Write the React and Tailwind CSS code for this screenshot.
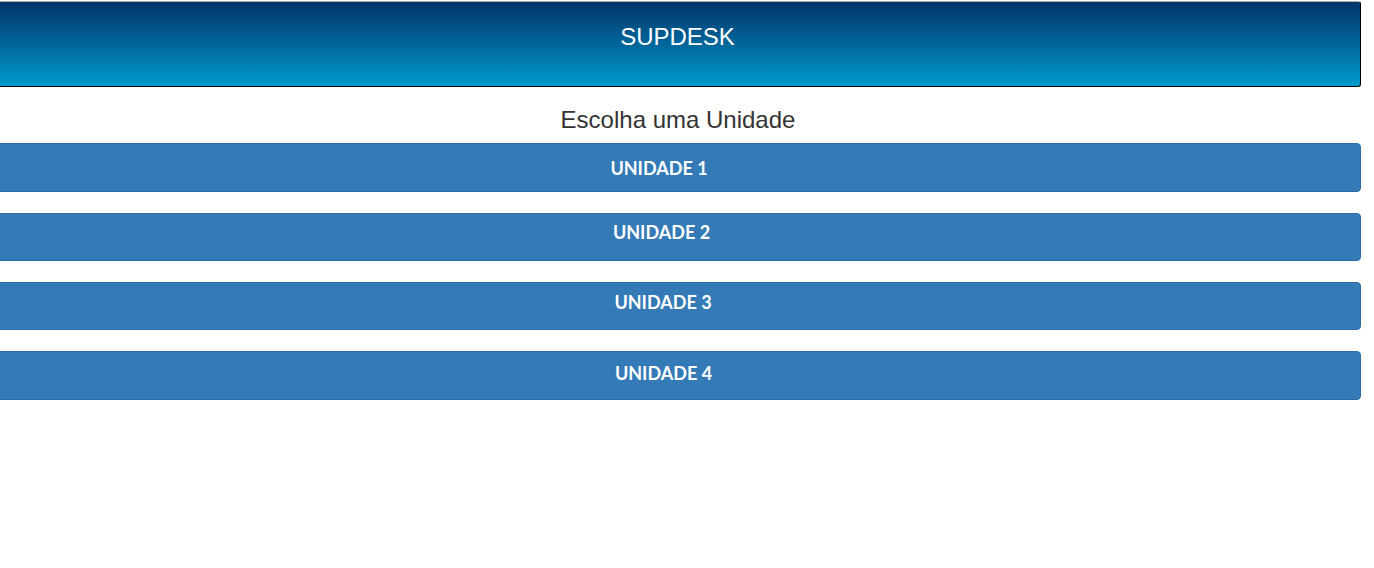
export default function App() {
  const btns = [
    { label: "UNIDADE 1", cls: "h-[49px] pt-[14px] pr-[41px] mt-[0px]" },
    { label: "UNIDADE 2", cls: "h-[48px] pt-[8px] pr-[36px] mt-[21px]" },
    { label: "UNIDADE 3", cls: "h-[48px] pt-[9px] pr-[33px] mt-[21px]" },
    { label: "UNIDADE 4", cls: "h-[49px] pt-[11px] pr-[32px] mt-[21px]" },
  ];
  return (
    <div className="w-[1374px] h-[568px] bg-white overflow-hidden">
      <div className="w-[1361px] pt-px flex flex-col">
        <div className="h-[86px] border-t border-t-[#b0b0b0] border-b border-b-black border-r border-r-black rounded-r-[3px] bg-linear-to-b from-[#02366a] to-[#009acd] flex justify-center pr-[5px] pt-[22px]">
          <span className="text-white text-[24px] leading-[26px] font-['Liberation_Sans',Arial,sans-serif]">SUPDESK</span>
        </div>
        <div className="mt-[20px] flex justify-center pr-[5px]">
          <span className="text-[#333333] text-[24px] leading-[26px] font-['Liberation_Sans',Arial,sans-serif]">Escolha uma Unidade</span>
        </div>
        <div className="mt-[10px] -ml-[2px] w-[1363px] flex flex-col">
          {btns.map((b) => (
            <button
              key={b.label}
              className={`${b.cls} w-full bg-[#337ab7] border border-[#2e6da4] rounded-r-[4px] flex justify-center items-start text-white font-bold text-[18px] leading-[20px] font-['Lato','Open_Sans',sans-serif]`}
            >
              {b.label}
            </button>
          ))}
        </div>
      </div>
    </div>
  );
}
